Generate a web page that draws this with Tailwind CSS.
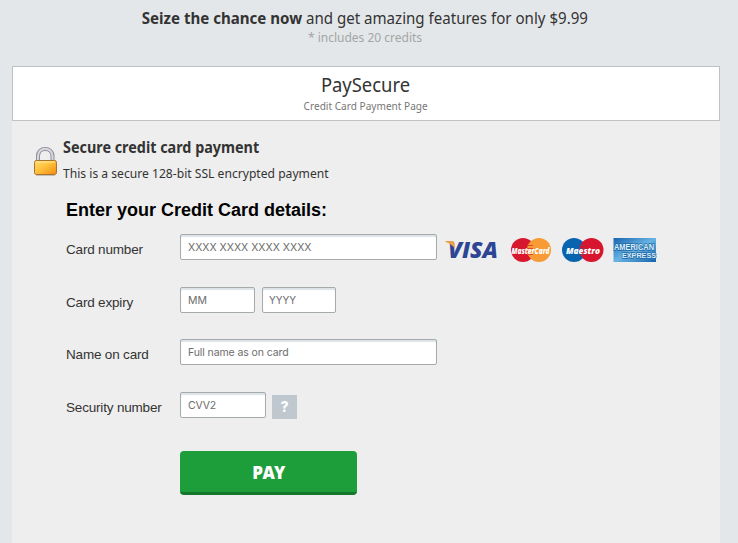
<!DOCTYPE html>
<html lang="en">
<head>
<meta charset="utf-8">
<title>PaySecure</title>
<script src="https://cdn.jsdelivr.net/npm/@tailwindcss/browser@4"></script>
</head>
<body class="h-[543px] w-[738px] overflow-hidden bg-[#e4e7e9] font-['Liberation_Sans',Arial,sans-serif] text-[#333]">
<header class="flex h-[66px] w-[730px] flex-col items-center pt-[6px] font-['Noto_Sans',sans-serif] whitespace-nowrap">
  <p class="h-[23px] scale-x-[.942] text-[16px] leading-[24px]"><b>Seize the chance now</b> and get amazing features for only $9.99</p>
  <p class="text-[12px] leading-[17px] text-[#a3a6a7]">* includes 20 credits</p>
</header>
<main class="ml-3 h-[477px] w-[708px] bg-[#eee]">
  <div class="flex h-[55px] flex-col items-center border border-[#bfc1c2] bg-white pt-[5px] pr-px font-['Noto_Sans',sans-serif] whitespace-nowrap">
    <h1 class="scale-x-[.92] text-[20px] leading-[26px]">PaySecure</h1>
    <p class="scale-x-[.917] text-[11px] leading-[15px] text-[#777]">Credit Card Payment Page</p>
  </div>
  <section class="flex h-[75px] gap-[5px] pt-[14px] pl-[21px] font-['Noto_Sans',sans-serif] whitespace-nowrap">
    <svg class="mt-[10px] h-[32px] w-[25px] shrink-0" viewBox="0 0 25 32">
      <defs>
        <linearGradient id="gold" x1="0" y1="0" x2="1" y2="1"><stop offset="0" stop-color="#ffdd70"/><stop offset=".45" stop-color="#ffc13d"/><stop offset="1" stop-color="#f28a12"/></linearGradient>
      </defs>
      <path d="M5 16V11C5 1.500 19.500 1.500 19.500 11V16" fill="none" stroke="#8b8794" stroke-width="4"/>
      <path d="M5 16V11C5 1.500 19.500 1.500 19.500 11V16" fill="none" stroke="#d7d6de" stroke-width="2.200"/>
      <rect x="1.500" y="15.500" width="22" height="14" rx="2" fill="url(#gold)" stroke="#ad7229"/>
      <path d="M3 17H22" stroke="#ffeaa0"/>
      <path d="M3 30.500H22" stroke="#555" stroke-opacity=".3"/>
    </svg>
    <div class="flex flex-col items-start">
      <h2 class="origin-left scale-x-[.898] text-[16px] leading-[24px] font-bold">Secure credit card payment</h2>
      <p class="mt-[6px] origin-left scale-x-[.969] text-[12.5px] leading-[18px]">This is a secure 128-bit SSL encrypted payment</p>
    </div>
  </section>
  <form class="pl-[54px]">
    <h3 class="h-[38px] pt-[3px] text-[18px] leading-[22px] font-bold text-black">Enter your Credit Card details:</h3>
    <div class="flex h-[52.500px]">
      <label class="w-[114px] pt-[8px] text-[13.500px] leading-[16px] tracking-[-.18px]">Card number</label>
      <input class="h-[26px] w-[257px] rounded-[2px] border border-[#a5aaad] bg-white px-[7px] pt-px font-['Inter',sans-serif] text-[10.500px] inset-shadow-[0_2px_1px_#dde3e6] placeholder:text-[#6c6c6c]" placeholder="XXXX XXXX XXXX XXXX">
      <div class="ml-[8px] flex h-[32px] items-center">
        <svg class="h-[30px] w-[214px] overflow-visible" viewBox="445 235 214 30">
          <defs>
            <linearGradient id="amex" x1="0" y1="0" x2="1" y2="1"><stop offset="0" stop-color="#1763ae"/><stop offset=".5" stop-color="#68b4e4"/><stop offset="1" stop-color="#1763ae"/></linearGradient>
          </defs>
          <text x="448" y="258" font-family="Open Sans, sans-serif" font-size="23" font-weight="800" font-style="italic" fill="#2e4595" textLength="50" lengthAdjust="spacingAndGlyphs">VISA</text>
          <path d="M445.500 241H452.500Q454 241 454.300 243L455 248.500Q451 243.500 445.500 242Z" fill="#e9a14b"/>
          <circle cx="523" cy="250" r="12" fill="#d6172d"/><circle cx="539" cy="250" r="12" fill="#f69b35"/>
          <path d="M527 245.500h6M527 248.500h6M527 251.500h6M527 254.500h6" stroke="#df4a2a"/>
          <text x="511.500" y="253.500" font-family="Open Sans, sans-serif" font-size="9" font-weight="800" font-style="italic" fill="#fff" textLength="38" lengthAdjust="spacingAndGlyphs">MasterCard</text>
          <circle cx="574" cy="250" r="12" fill="#0864ae"/><circle cx="591.500" cy="250" r="12" fill="#d7152f"/>
          <path d="M579 245.500h6M579 248.500h6M579 251.500h6M579 254.500h6" stroke="#843963"/>
          <text x="566" y="253.500" font-family="Open Sans, sans-serif" font-size="9.500" font-weight="800" font-style="italic" fill="#fff" textLength="34" lengthAdjust="spacingAndGlyphs">Maestro</text>
          <rect x="613.500" y="238" width="42.500" height="24" fill="url(#amex)"/>
          <g font-family="Liberation Sans, sans-serif" font-weight="700" fill="#d9eefb" stroke="#2368a5" stroke-width="1.400" paint-order="stroke">
            <text x="614" y="249.800" font-size="8.500" textLength="40" lengthAdjust="spacingAndGlyphs">AMERICAN</text>
            <text x="622" y="258.200" font-size="8" textLength="34" lengthAdjust="spacingAndGlyphs">EXPRESS</text>
          </g>
        </svg>
      </div>
    </div>
    <div class="flex h-[52.500px]">
      <label class="w-[114px] pt-[8px] text-[13.500px] leading-[16px] tracking-[-.18px]">Card expiry</label>
      <input class="h-[26px] w-[75px] rounded-[2px] border border-[#a5aaad] bg-white px-[7px] pt-px font-['Inter',sans-serif] text-[10.500px] inset-shadow-[0_2px_1px_#dde3e6] placeholder:text-[#6c6c6c]" placeholder="MM">
      <input class="ml-[7px] h-[26px] w-[74px] rounded-[2px] border border-[#a5aaad] bg-white px-[6px] pt-px font-['Inter',sans-serif] text-[10px] inset-shadow-[0_2px_1px_#dde3e6] placeholder:text-[#6c6c6c]" placeholder="YYYY">
    </div>
    <div class="flex h-[52.500px]">
      <label class="w-[114px] pt-[8px] text-[13.500px] leading-[16px] tracking-[-.18px]">Name on card</label>
      <input class="h-[26px] w-[257px] rounded-[2px] border border-[#a5aaad] bg-white px-[7px] pt-px font-['Inter',sans-serif] text-[10.500px] tracking-[-.1px] inset-shadow-[0_2px_1px_#dde3e6] placeholder:text-[#6c6c6c]" placeholder="Full name as on card">
    </div>
    <div class="flex h-[59.500px]">
      <label class="w-[114px] pt-[8px] text-[13.500px] leading-[16px] tracking-[-.18px]">Security number</label>
      <input class="h-[26px] w-[86px] rounded-[2px] border border-[#a5aaad] bg-white px-[7px] pt-px font-['Inter',sans-serif] text-[10.500px] tracking-[-.2px] inset-shadow-[0_2px_1px_#dde3e6] placeholder:text-[#6c6c6c]" placeholder="CVV2">
      <button type="button" class="mt-[3px] ml-[6px] h-[24px] w-[25px] bg-[#bec8ce] font-['Inter',sans-serif] text-[14px] leading-[24px] font-extrabold text-white">?</button>
    </div>
    <button type="button" class="ml-[114px] h-[44px] w-[177px] rounded-[4px] border-b-3 border-[#14772c] bg-[#1e9e3a] pt-[2px] font-['Open_Sans',sans-serif] text-[17px] leading-[39px] font-extrabold tracking-[-.7px] text-white">PAY</button>
  </form>
</main>
</body>
</html>
